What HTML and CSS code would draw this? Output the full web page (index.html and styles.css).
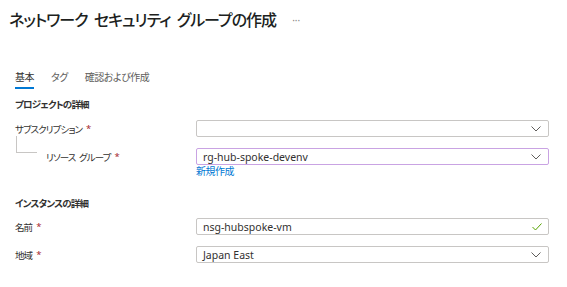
FILE: index.html
```html
<!DOCTYPE html>
<html lang="ja">
<head>
    <meta charset="UTF-8">
    <title>ネットワーク セキュリティ グループの作成</title>
    <link rel="stylesheet" href="styles.css">
</head>
<body>

<div class="title-bar">
    <h1>ネットワーク セキュリティ グループの作成</h1>
    <span class="more">···</span>
</div>

<div class="tabs">
    <a href="#" class="tab active">基本</a>
    <a href="#" class="tab">タグ</a>
    <a href="#" class="tab">確認および作成</a>
</div>

<div class="section">
    <h2>プロジェクトの詳細</h2>
    <div class="row">
        <label>サブスクリプション <span class="req">*</span></label>
        <div class="field">
            <div class="select">
                <span class="value"></span>
                <svg class="chevron" width="10" height="6" viewBox="0 0 10 6"><polyline points="0.5,0.5 5,5 9.5,0.5" fill="none" stroke="#605e5c" stroke-width="1"/></svg>
            </div>
        </div>
    </div>
    <div class="row sub">
        <label><span class="tree"></span>リソース グループ <span class="req">*</span></label>
        <div class="field">
            <div class="select focused">
                <span class="value">rg-hub-spoke-devenv</span>
                <svg class="chevron" width="10" height="6" viewBox="0 0 10 6"><polyline points="0.5,0.5 5,5 9.5,0.5" fill="none" stroke="#605e5c" stroke-width="1"/></svg>
            </div>
            <a href="#" class="link">新規作成</a>
        </div>
    </div>
</div>

<div class="section second">
    <h2>インスタンスの詳細</h2>
    <div class="row">
        <label>名前 <span class="req">*</span></label>
        <div class="field">
            <div class="select">
                <span class="value">nsg-hubspoke-vm</span>
                <svg class="check" width="10" height="8" viewBox="0 0 10 8"><polyline points="0.5,4 3.5,7 9.5,0.5" fill="none" stroke="#57a300" stroke-width="1"/></svg>
            </div>
        </div>
    </div>
    <div class="row">
        <label>地域 <span class="req">*</span></label>
        <div class="field">
            <div class="select">
                <span class="value">Japan East</span>
                <svg class="chevron" width="10" height="6" viewBox="0 0 10 6"><polyline points="0.5,0.5 5,5 9.5,0.5" fill="none" stroke="#605e5c" stroke-width="1"/></svg>
            </div>
        </div>
    </div>
</div>

</body>
</html>
```

FILE: styles.css
```css
body {
    margin: 0;
    padding: 0;
    background-color: #ffffff;
    font-family: "Noto Sans", "Noto Sans CJK JP", sans-serif;
    font-feature-settings: "palt";
    color: #323130;
}
/* Page header */
.title-bar {
    display: flex;
    align-items: center;
    height: 40px;
    padding-left: 9px;
}
.title-bar h1 {
    margin: 0;
    font-size: 16px;
    font-weight: 500;
    line-height: 40px;
    letter-spacing: -1px;
    word-spacing: 3px;
    color: #201f1e;
}
.more {
    margin-left: 16px;
    font-size: 10px;
    color: #8a8886;
}
/* Tabs */
.tabs {
    display: flex;
    gap: 17px;
    margin: 29px 0 0 15px;
}
.tab {
    display: block;
    font-size: 10px;
    line-height: 16px;
    letter-spacing: -0.5px;
    padding-bottom: 2px;
    color: #605e5c;
    text-decoration: none;
    border-bottom: 2px solid transparent;
}
.tab.active {
    color: #323130;
    border-bottom-color: #0078d4;
}
/* Form sections */
.section {
    padding: 0 18px 0 15px;
    margin-top: 8px;
}
.section.second {
    margin-top: 19px;
}
.section h2 {
    margin: 0 0 7px;
    font-size: 9.5px;
    font-weight: 700;
    line-height: 16px;
    letter-spacing: -0.8px;
}
.section.second h2 {
    margin-bottom: 6px;
}
.row {
    display: grid;
    grid-template-columns: 181px 353px;
    margin-bottom: 11px;
}
.row label {
    display: flex;
    align-items: center;
    height: 17px;
    font-size: 9.5px;
    letter-spacing: -0.9px;
    word-spacing: 2px;
    color: #323130;
}
.req {
    color: #a4262c;
    margin-left: 4px;
}
.row.sub label {
    padding-left: 31px;
    position: relative;
}
/* connector line from parent field */
.tree {
    position: absolute;
    left: 1px;
    top: -12px;
    width: 20px;
    height: 16px;
    border-left: 1px solid #c8c6c4;
    border-bottom: 1px solid #c8c6c4;
}
.select {
    display: flex;
    align-items: center;
    justify-content: space-between;
    box-sizing: border-box;
    height: 17px;
    padding: 0 6px 0 6px;
    border: 1px solid #c8c6c4;
    border-radius: 2px;
    font-size: 10.5px;
    color: #323130;
}
.select.focused {
    border-color: #c9a3e3;
}
.chevron {
    margin-right: 1px;
}
.link {
    display: block;
    font-size: 10px;
    line-height: 12px;
    letter-spacing: -0.5px;
    color: #0078d4;
    text-decoration: none;
}
.row.sub {
    margin-bottom: 0;
}
```
